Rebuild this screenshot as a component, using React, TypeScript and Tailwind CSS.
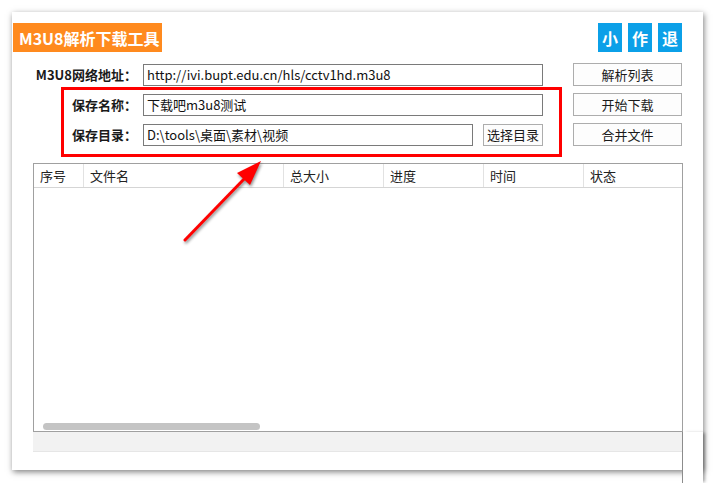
import React from "react";

const font = { fontFamily: '"Noto Sans CJK SC", "Noto Sans", sans-serif' };

const columns = [
  { title: "序号", w: "w-[50px]" },
  { title: "文件名", w: "w-[200px]" },
  { title: "总大小", w: "w-[100px]" },
  { title: "进度", w: "w-[100px]" },
  { title: "时间", w: "w-[100px]" },
  { title: "状态", w: "flex-1" },
];

const Label = ({ children }: { children: React.ReactNode }) => (
  <div className="w-[104px] shrink-0 whitespace-nowrap text-right text-[13px] font-bold leading-none text-[#1a1a1a]">
    {children}
  </div>
);

const Field = ({ value, w }: { value: string; w: string }) => (
  <div
    className={`${w} ml-[6px] flex h-[22px] shrink-0 items-center whitespace-nowrap border border-[#7a7a7a] bg-white px-[3px] text-[13px] leading-none text-[#111]`}
  >
    {value}
  </div>
);

const Btn = ({ children, w, h = "h-[23px]" }: { children: React.ReactNode; w: string; h?: string }) => (
  <div
    className={`${w} ${h} flex shrink-0 items-center justify-center whitespace-nowrap border border-[#adadad] bg-[#fdfdfd] text-[13px] leading-none text-[#1a1a1a]`}
  >
    {children}
  </div>
);

const Square = ({ ch }: { ch: string }) => (
  <div className="flex h-[29px] w-[24px] items-center justify-center bg-[#0ba0e8] text-[16px] font-bold text-white">
    {ch}
  </div>
);

export default function App() {
  return (
    <div className="relative h-[483px] w-[716px] overflow-hidden bg-white" style={font}>
      <div className="pl-[12px] pt-[12px]">
        <div className="relative h-[458px] w-[691px] bg-white shadow-[1px_2px_6px_rgba(0,0,0,0.5)]">
          {/* title bar */}
          <div className="flex items-start justify-between pl-[1px] pr-[21px] pt-[11px]">
            <div className="flex h-[29px] w-[149px] items-center whitespace-nowrap bg-[#ff8a1e] pl-[6px] text-[16px] font-bold text-white">
              M3U8解析下载工具
            </div>
            <div className="flex gap-[6px]">
              <Square ch="小" />
              <Square ch="作" />
              <Square ch="退" />
            </div>
          </div>

          {/* form */}
          <div className="mt-[11px] flex flex-col gap-[7px] pl-[21px]">
            <div className="flex items-center">
              <Label>M3U8网络地址：</Label>
              <Field value="http://ivi.bupt.edu.cn/hls/cctv1hd.m3u8" w="w-[400px]" />
              <div className="ml-[30px]">
                <Btn w="w-[109px]">解析列表</Btn>
              </div>
            </div>
            <div className="flex items-center">
              <Label>保存名称：</Label>
              <Field value="下载吧m3u8测试" w="w-[400px]" />
              <div className="ml-[30px]">
                <Btn w="w-[109px]">开始下载</Btn>
              </div>
            </div>
            <div className="flex items-center">
              <Label>保存目录：</Label>
              <Field value="D:\tools\桌面\素材\视频" w="w-[330px]" />
              <div className="ml-[10px]">
                <Btn w="w-[60px]" h="h-[22px]">选择目录</Btn>
              </div>
              <div className="ml-[30px]">
                <Btn w="w-[109px]">合并文件</Btn>
              </div>
            </div>
          </div>

          {/* highlight box */}
          <div className="absolute left-[49px] top-[75px] h-[70px] w-[501px] border-[3px] border-[#ff0000]" />

          {/* table */}
          <div className="ml-[21px] mt-[17px] w-[650px]">
            <div className="flex h-[269px] flex-col border border-[#a0a0a0] bg-white">
              <div className="flex h-[24px] shrink-0 border-b border-[#d5d5d5]">
                {columns.map((c, i) => (
                  <div
                    key={c.title}
                    className={`${c.w} flex items-center pl-[6px] text-[13px] leading-none text-[#222] ${
                      i < columns.length - 1 ? "border-r border-[#e2e2e2]" : ""
                    }`}
                  >
                    {c.title}
                  </div>
                ))}
              </div>
              <div className="flex flex-1 items-end pb-[1px] pl-[9px]">
                <div className="h-[7px] w-[217px] rounded-full bg-[#c4c4c4]" />
              </div>
            </div>
            <div className="h-[20px] border-b border-[#e6e6e6] bg-[#f2f2f2]" />
          </div>
        </div>
      </div>

      {/* window edge strip at lower right */}
      <div className="absolute left-[682px] top-[432px] h-[51px] w-[21px] border-l border-[#8c8c8c] bg-white shadow-[3px_0_3px_-1px_rgba(0,0,0,0.35)]" />

      {/* arrow */}
      <svg
        className="absolute left-0 top-0 drop-shadow-[1px_2px_1.5px_rgba(0,0,0,0.45)]"
        width="716"
        height="483"
        viewBox="0 0 716 483"
      >
        <line x1="185" y1="240" x2="246" y2="177" stroke="#ff0000" strokeWidth="3" strokeLinecap="round" />
        <polygon points="261,161 250,185 237,173" fill="#ff0000" />
      </svg>
    </div>
  );
}
